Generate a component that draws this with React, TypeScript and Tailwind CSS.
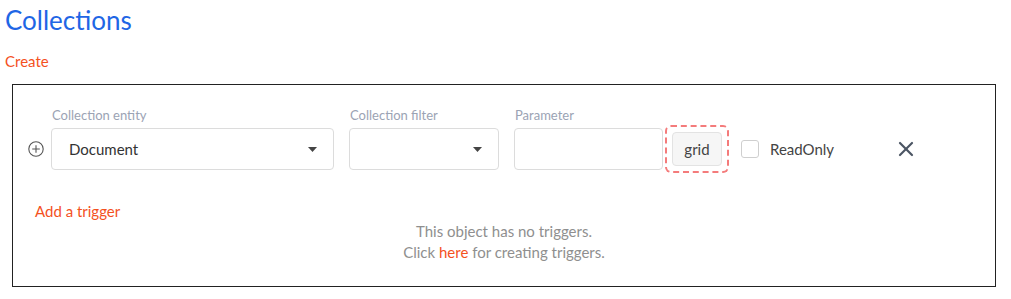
import { X } from 'lucide-react';

function Caret() {
  return (
    <svg width="9" height="5" viewBox="0 0 9 5" className="text-[#444]">
      <path d="M0 0h9L4.5 5z" fill="currentColor" />
    </svg>
  );
}

function PlusCircle() {
  return (
    <svg width="16" height="16" viewBox="0 0 16 16" fill="none" stroke="#555" strokeWidth="1.1">
      <circle cx="8" cy="8" r="7.2" />
      <path d="M8 4.2v7.6M4.2 8h7.6" />
    </svg>
  );
}

interface FieldProps {
  label: string;
  width: string;
  children?: React.ReactNode;
}

function Field({ label, width, children }: FieldProps) {
  return (
    <div className={`flex flex-col ${width}`}>
      <div className="text-[13px] leading-[18px] text-[#9ba3b4] mb-[4px] pl-[1px]">{label}</div>
      <div className="h-[42px] rounded-[4px] border border-[#dcdcdc] bg-white flex items-center pl-[17px] pr-[16px]">
        {children}
      </div>
    </div>
  );
}

export default function App() {
  return (
    <div className="pl-[5px] font-['Lato','Liberation_Sans',sans-serif] bg-white min-h-[299px]">
      <h1 className="text-[26px] leading-[40px] text-[#1f66e5]">Collections</h1>
      <div className="mt-[11px] text-[15px] leading-[20px] text-[#f4511e]">Create</div>

      <div className="mt-[13px] ml-[7px] w-[984px] border border-[#222] pt-[21px] pb-[23px]">
        <div className="flex items-start pl-[15px]">
          <div className="mt-[22px] h-[42px] flex items-center mr-[7px]">
            <PlusCircle />
          </div>
          <Field label="Collection entity" width="w-[283px]">
            <span className="flex-1 text-[15px] text-[#333]">Document</span>
            <Caret />
          </Field>
          <div className="w-[15px]" />
          <Field label="Collection filter" width="w-[150px]">
            <span className="flex-1" />
            <Caret />
          </Field>
          <div className="w-[15px]" />
          <Field label="Parameter" width="w-[149px]" />
          <div className="mt-[22px] h-[42px] flex items-center ml-[2px]">
            <div className="w-[64px] h-[48px] border-2 border-dashed border-[#f47b7b] rounded-[6px] flex items-center justify-center">
              <div className="w-[50px] h-[34px] rounded-[4px] border border-[#e3e3e3] bg-[#f6f6f6] flex items-center justify-center text-[15px] text-[#444]">
                grid
              </div>
            </div>
          </div>
          <div className="mt-[22px] h-[42px] flex items-center ml-[12px]">
            <div className="w-[18px] h-[18px] rounded-[3px] border border-[#cfcfcf] bg-white" />
            <span className="ml-[11px] text-[15px] text-[#444]">ReadOnly</span>
          </div>
          <div className="mt-[22px] h-[42px] flex items-center ml-[60px]">
            <X size={24} strokeWidth={2.2} className="text-[#4b5563]" />
          </div>
        </div>

        <div className="mt-[31px] pl-[22px] text-[15px] leading-[20px] text-[#f4511e]">Add a trigger</div>
        <div className="text-center text-[15px] leading-[21px] text-[#8f8f8f]">
          <div>This object has no triggers.</div>
          <div>
            Click <span className="text-[#f4511e]">here</span> for creating triggers.
          </div>
        </div>
      </div>
    </div>
  );
}
